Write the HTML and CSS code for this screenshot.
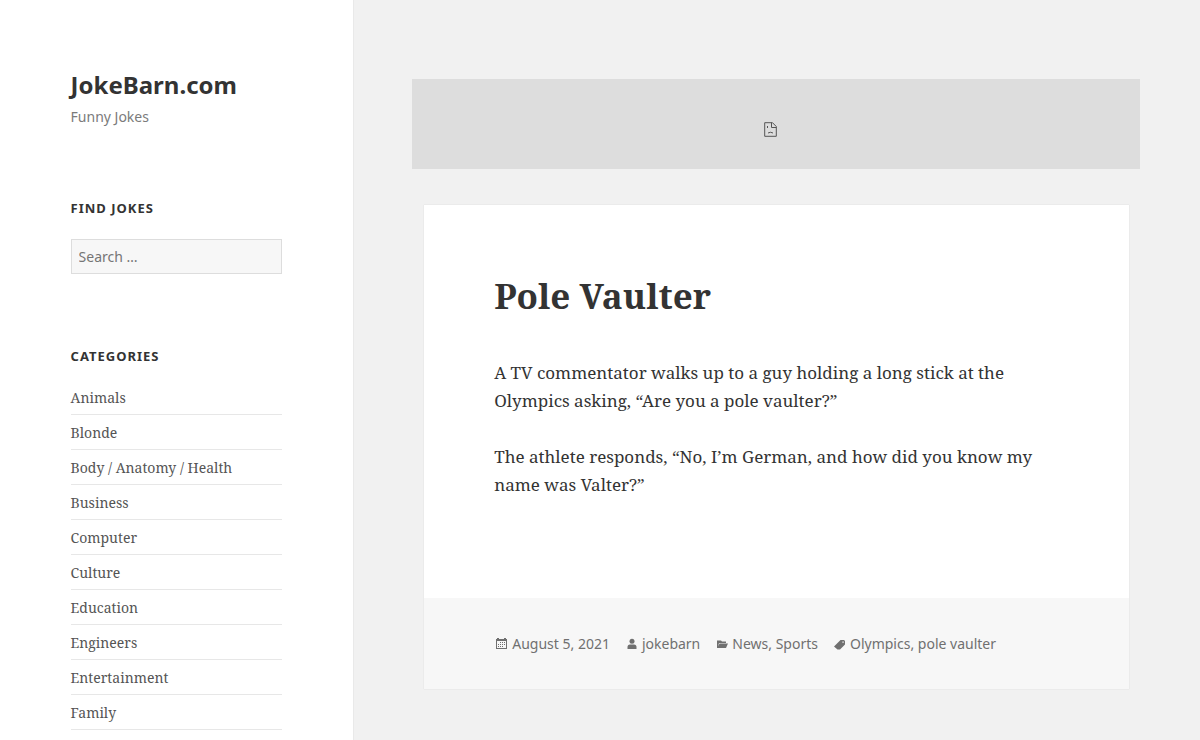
FILE: index.html
```html
<!DOCTYPE html>
<html lang="en">
<head>
<meta charset="utf-8">
<title>Pole Vaulter – JokeBarn.com</title>
<meta name="viewport" content="width=device-width, initial-scale=1">
<link rel="stylesheet" href="styles.css">
</head>
<body>
<div class="site">
  <aside class="sidebar">
    <header class="branding">
      <p class="site-title"><a href="#">JokeBarn.com</a></p>
      <p class="tagline">Funny Jokes</p>
    </header>
    <section class="widget">
      <h2 class="widget-title"><label for="search">Find Jokes</label></h2>
      <form class="search-form"><input class="search-field" id="search" type="search" placeholder="Search …"></form>
    </section>
    <nav class="widget categories" aria-labelledby="cat-title">
      <h2 class="widget-title" id="cat-title">Categories</h2>
      <ul class="category-list">
        <li><a href="#">Animals</a></li>
        <li><a href="#">Blonde</a></li>
        <li><a href="#">Body / Anatomy / Health</a></li>
        <li><a href="#">Business</a></li>
        <li><a href="#">Computer</a></li>
        <li><a href="#">Culture</a></li>
        <li><a href="#">Education</a></li>
        <li><a href="#">Engineers</a></li>
        <li><a href="#">Entertainment</a></li>
        <li><a href="#">Family</a></li>
      </ul>
    </nav>
  </aside>
  <main class="content">
    <div class="banner">
      <svg class="banner-icon" viewBox="0 0 13 15" aria-hidden="true"><path d="M.7.7h7.800l3.800 3.800v9.800H.7zM7.500.7v4.800h4.800M3.500 4v2M4 11q2.500-1.500 5 0"/></svg>
    </div>
    <article class="post">
      <div class="post-body">
        <h1 class="post-title">Pole Vaulter</h1>
        <p>A TV commentator walks up to a guy holding a long stick at the Olympics asking, “Are you a pole vaulter?”</p>
        <p>The athlete responds, “No, I’m German, and how did you know my name was Valter?”</p>
      </div>
      <footer class="post-meta">
        <span class="meta-item"><svg viewBox="0 0 16 16" aria-hidden="true"><path fill-rule="evenodd" d="M2 3h1V2h2v1h5V2h2v1h1v10H2zM3 5v7h9V5zM6 6h1v1H6zM8 6h1v1H8zM10 6h1v1h-1zM4 8h1v1H4zM6 8h1v1H6zM8 8h1v1H8zM10 8h1v1h-1zM4 10h1v1H4zM6 10h1v1H6zM8 10h1v1H8z"/></svg><a href="#">August 5, 2021</a></span>
        <span class="meta-item"><svg viewBox="0 0 16 16" aria-hidden="true"><circle cx="8" cy="5.300" r="2.500"/><path d="M3.500 13v-2Q3.500 8.500 6 8.500h4q2.500 0 2.500 2.500v2z"/></svg><a href="#">jokebarn</a></span>
        <span class="meta-item"><svg viewBox="0 0 16 16" aria-hidden="true"><path d="M3 12V4.500h4l1 1h4V7H5l-1 3.500L5.500 7.600H14L12 12z"/></svg><span><a href="#">News</a>, <a href="#">Sports</a></span></span>
        <span class="meta-item"><svg viewBox="0 0 16 16" aria-hidden="true"><path fill-rule="evenodd" d="M8.500 4H12l1 1v3.500L8 13.500H5.500L2 10.500zM10.400 5.500v1.300h1.300V5.500z"/></svg><span><a href="#">Olympics</a>, <a href="#">pole vaulter</a></span></span>
      </footer>
    </article>
  </main>
</div>
</body>
</html>
```
FILE: styles.css
```css
* { box-sizing: border-box; }
html { overflow: hidden; }
body { margin: 0; background: #f1f1f1; color: #333; font-family: "Noto Sans", sans-serif; }
a { color: inherit; text-decoration: none; }
h1, h2, p, ul { margin: 0; padding: 0; }
.site { display: grid; grid-template-columns: 5fr 12fr; min-height: 100vh; }
.sidebar { background: #fff; box-shadow: 1px 0 0 #e9e9e9; padding: 68px 20% 0; }
.site-title { font-size: 24px; line-height: 34px; font-weight: 700; }
.tagline { margin-top: 6px; font-size: 14px; line-height: 18px; color: #7b7b7b; }
.widget { margin-top: 72px; }
.widget-title { font-size: 13px; line-height: 20px; font-weight: 700; letter-spacing: 1px; text-transform: uppercase; }
.search-form { margin-top: 21px; }
.search-field { display: block; width: 100%; height: 35px; margin: 0; padding: 0 7px; border: 1px solid #ddd; border-radius: 0; background: #f7f7f7; color: #707070; font: 14px "Noto Sans", sans-serif; appearance: none; }
.category-list { margin-top: 14px; list-style: none; font: 14px/20px "Noto Serif", "Noto Sans", serif; color: #555; }
.category-list li { padding: 8px 0 6px; border-bottom: 1px solid #e7e7e7; }
.content { padding: 79px 7% 50px; }
.banner { display: flex; justify-content: center; align-items: center; max-width: 728px; height: 90px; padding: 11px 12px 0 0; background: #ddd; }
.banner-icon { width: 13px; height: 15px; fill: none; stroke: #555; }
.post { margin: 36px 12px 0; background: #fff; box-shadow: 0 0 1px rgba(0, 0, 0, 0.15); }
.post-body { padding: 67px 70px 99px; font: 17px/28px "Noto Serif", serif; }
.post-title { font-size: 35px; line-height: 48px; margin-bottom: 39px; }
.post-body p + p { margin-top: 28px; }
.post-meta { display: flex; flex-wrap: wrap; gap: 8px 14px; padding: 35px 70px 34px; background: #f7f7f7; color: #707070; font-size: 14px; line-height: 22px; }
.meta-item { display: flex; align-items: center; gap: 2px; }
.meta-item svg { width: 16px; height: 16px; fill: currentColor; }
```
